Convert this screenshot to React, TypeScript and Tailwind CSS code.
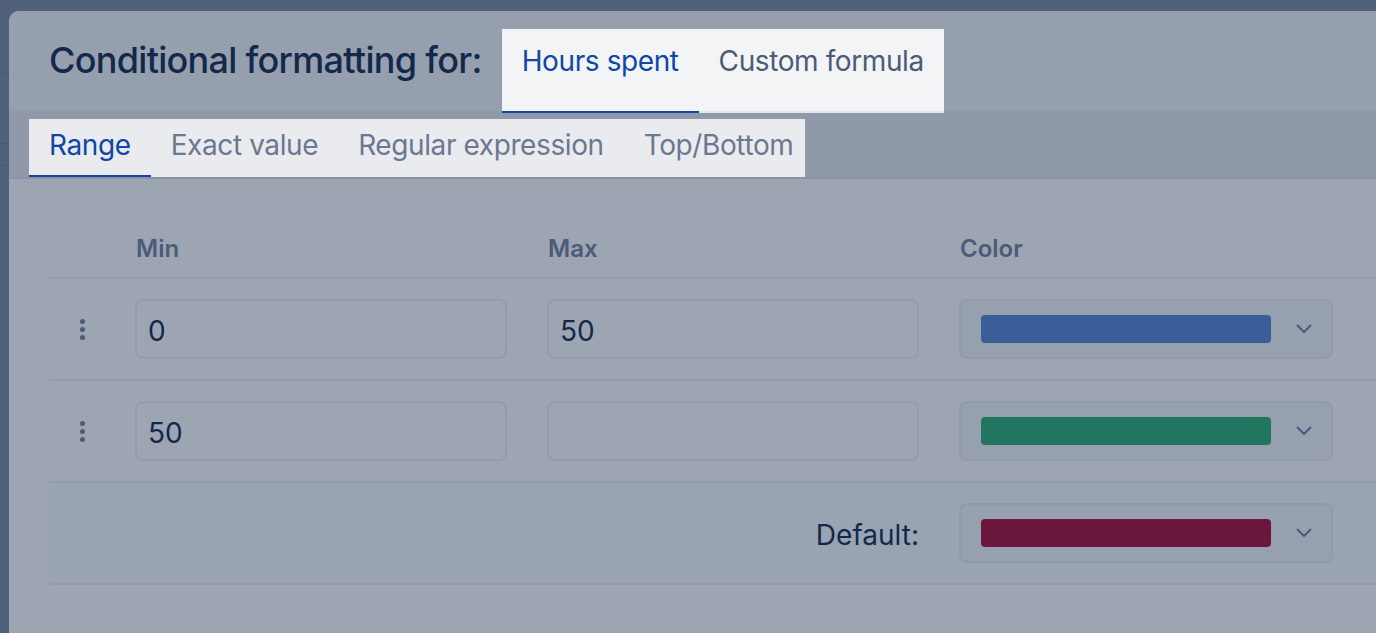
import React from "react";

function Dots() {
  return (
    <div className="flex w-[86px] shrink-0 flex-col items-start pl-[31px] gap-[3px]">
      <span className="block h-[5px] w-[5px] rounded-full bg-[#4b5b78]" />
      <span className="block h-[5px] w-[5px] rounded-full bg-[#4b5b78]" />
      <span className="block h-[5px] w-[5px] rounded-full bg-[#4b5b78]" />
    </div>
  );
}

function Input({ value }: { value: string }) {
  return (
    <div className="flex h-[60px] w-[372px] shrink-0 items-center rounded-[8px] border-2 border-[#939cab] pl-[11px] pt-[4px] text-[28px] leading-[28px] text-[#13284b]">
      {value}
    </div>
  );
}

function ColorSelect({ color }: { color: string }) {
  return (
    <div className="flex h-[60px] w-[374px] shrink-0 items-center rounded-[8px] border-2 border-[#919aaa] bg-[#97a0af] pl-[20px]">
      <div className={`h-[28px] w-[290px] rounded-[4px] ${color}`} />
      <svg
        className="ml-[25px]"
        width="16"
        height="10"
        viewBox="0 0 16 10"
        fill="none"
      >
        <path
          d="M1.5 1.5 L8 8 L14.5 1.5"
          stroke="#4b5b78"
          strokeWidth="2"
          strokeLinecap="round"
          strokeLinejoin="round"
        />
      </svg>
    </div>
  );
}

export default function App() {
  return (
    <div className="flex h-[633px] w-[1376px] overflow-hidden bg-[#52617b] font-['Inter',sans-serif]">
      <div className="flex w-[9px] shrink-0 flex-col">
        <div className="h-[73px]" />
        <div className="h-[1px] bg-[#4b5973]" />
        <div className="h-[69px]" />
        <div className="h-[1px] bg-[#4b5973]" />
        <div className="h-[21px]" />
        <div className="h-[1px] bg-[#4b5973]" />
      </div>
      <div className="flex min-w-0 flex-1 flex-col pt-[11px]">
        <div className="flex flex-1 flex-col overflow-hidden rounded-tl-[10px] bg-[#9ea5b2]">
          {/* header */}
          <div className="flex h-[100px] shrink-0 items-start bg-[#959fae] pl-[40px]">
            <h1 className="mt-[31px] whitespace-nowrap text-[36px] font-medium leading-[36px] tracking-[-0.7px] text-[#13284b]">
              Conditional formatting for:
            </h1>
            <div className="relative z-10 ml-[20px] mt-[18px] flex h-[84px] bg-[#f3f4f6] tracking-[-0.4px]">
              <div className="flex h-full items-start border-b-[2px] border-[#1047a6] px-[20px] pt-[18px] text-[28px] leading-[28px] text-[#0e47a8]">
                Hours spent
              </div>
              <div className="flex h-full items-start border-b-[2px] border-[#e4e6ea] px-[20px] pt-[18px] text-[28px] leading-[28px] text-[#4b5b78]">
                Custom formula
              </div>
            </div>
          </div>
          {/* sub tabs */}
          <div className="flex h-[68px] shrink-0 items-start border-b-2 border-[#8a93a3] bg-[#8f99a9] pl-[20px]">
            <div className="mt-[8px] flex h-[58px] bg-[#eaebef] tracking-[-0.4px]">
              <div className="flex h-full items-start border-b-[2px] border-[#1047a6] px-[20px] pt-[12px] text-[28px] leading-[28px] text-[#0e47a8]">
                Range
              </div>
              <div className="flex h-full items-start px-[20px] pt-[12px] text-[28px] leading-[28px] text-[#6b7890]">
                Exact value
              </div>
              <div className="flex h-full items-start px-[20px] pt-[12px] text-[28px] leading-[28px] text-[#6b7890]">
                Regular expression
              </div>
              <div className="flex h-full items-start pl-[20px] pr-[12px] pt-[12px] text-[28px] leading-[28px] text-[#6b7890]">
                Top/Bottom
              </div>
            </div>
          </div>
          {/* body */}
          <div className="flex flex-col pl-[40px] pt-[40px]">
            <div className="flex h-[60px] items-center border-b-2 border-[#939cab] pt-[1px] text-[24px] font-semibold leading-[24px] text-[#4b5b78]">
              <div className="w-[87px] shrink-0" />
              <div className="w-[412px] shrink-0">Min</div>
              <div className="w-[412px] shrink-0">Max</div>
              <div>Color</div>
            </div>
            <div className="flex items-center gap-[40px] border-b-2 border-[#939cab] py-[20px]">
              <div className="-mr-[40px] flex">
                <Dots />
              </div>
              <Input value="0" />
              <Input value="50" />
              <ColorSelect color="bg-[#3a5f98]" />
            </div>
            <div className="flex items-center gap-[40px] border-b-2 border-[#939cab] py-[20px]">
              <div className="-mr-[40px] flex">
                <Dots />
              </div>
              <Input value="50" />
              <Input value="" />
              <ColorSelect color="bg-[#22755e]" />
            </div>
            <div className="flex items-center border-b-2 border-[#939cab] bg-[#9aa3b1] py-[20px]">
              <div className="flex w-[870px] shrink-0 justify-end pt-[4px] text-[28px] leading-[28px] text-[#13284b]">
                Default:
              </div>
              <div className="ml-[40px]">
                <ColorSelect color="bg-[#6b173d]" />
              </div>
            </div>
          </div>
        </div>
      </div>
    </div>
  );
}
